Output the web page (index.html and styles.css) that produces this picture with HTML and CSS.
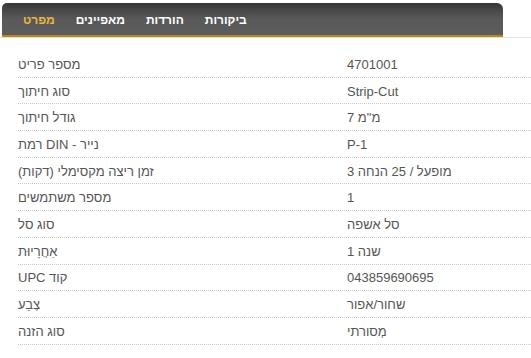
FILE: index.html
```html
<!DOCTYPE html>
<html lang="he">
<head>
<meta charset="utf-8">
<title>מפרט</title>
<link rel="stylesheet" href="styles.css">
</head>
<body>
<div class="tabs-wrap">
  <nav class="tabs">
    <span class="tab active">מפרט</span>
    <span class="tab">מאפיינים</span>
    <span class="tab">הורדות</span>
    <span class="tab">ביקורות</span>
  </nav>
</div>
<dl class="specs">
  <div class="row"><dt>מספר פריט</dt><dd>4701001</dd></div>
  <div class="row"><dt>סוג חיתוך</dt><dd>Strip-Cut</dd></div>
  <div class="row"><dt>גודל חיתוך</dt><dd>מ"מ 7</dd></div>
  <div class="row"><dt>נייר - DIN רמת</dt><dd>P-1</dd></div>
  <div class="row"><dt>זמן ריצה מקסימלי (דקות)</dt><dd>מופעל / 25 הנחה 3</dd></div>
  <div class="row"><dt>מספר משתמשים</dt><dd>1</dd></div>
  <div class="row"><dt>סוג סל</dt><dd>סל אשפה</dd></div>
  <div class="row"><dt>אַחֲרָיוּת</dt><dd>שנה 1</dd></div>
  <div class="row"><dt>קוד UPC</dt><dd>043859690695</dd></div>
  <div class="row"><dt>צֶבַע</dt><dd>שחור/אפור</dd></div>
  <div class="row"><dt>סוג הזנה</dt><dd>מְסורתי</dd></div>
</dl>
</body>
</html>
```

FILE: styles.css
```css
html, body {
  margin: 0;
  padding: 0;
  background: #ffffff;
}

body {
  font-family: "Liberation Sans", Arial, sans-serif;
  padding-top: 3px;
}

.tabs-wrap {
  border-bottom: 1px solid #e2e2e2;
  padding-left: 2px;
}

.tabs {
  width: 480px;
  height: 32px;
  display: flex;
  align-items: center;
  gap: 21px;
  padding-left: 21px;
  box-sizing: content-box;
  background: linear-gradient(to bottom, #343434 0px, #4a4a4a 8px, #595959 16px, #5c5c5c 100%);
  border-radius: 5px 6px 0 0;
  border-bottom: 2px solid #b4862c;
  box-shadow: 0 1px 0 #f1dfae;
}

.tab {
  font-size: 12px;
  font-weight: bold;
  color: #ffffff;
  padding-top: 1px;
}

.tab.active {
  color: #e9b53b;
}

.specs {
  margin: 13px 0 0 18px;
  padding: 0;
}

.row {
  display: grid;
  grid-template-columns: 329px 1fr;
  border-bottom: 1px dotted #c8c8c8;
  height: 25.7px;
  align-items: center;
}

.row dt,
.row dd {
  margin: 0;
  direction: rtl;
  text-align: left;
  font-size: 13px;
  color: #555555;
  line-height: 16px;
  padding-top: 2px;
}
```
